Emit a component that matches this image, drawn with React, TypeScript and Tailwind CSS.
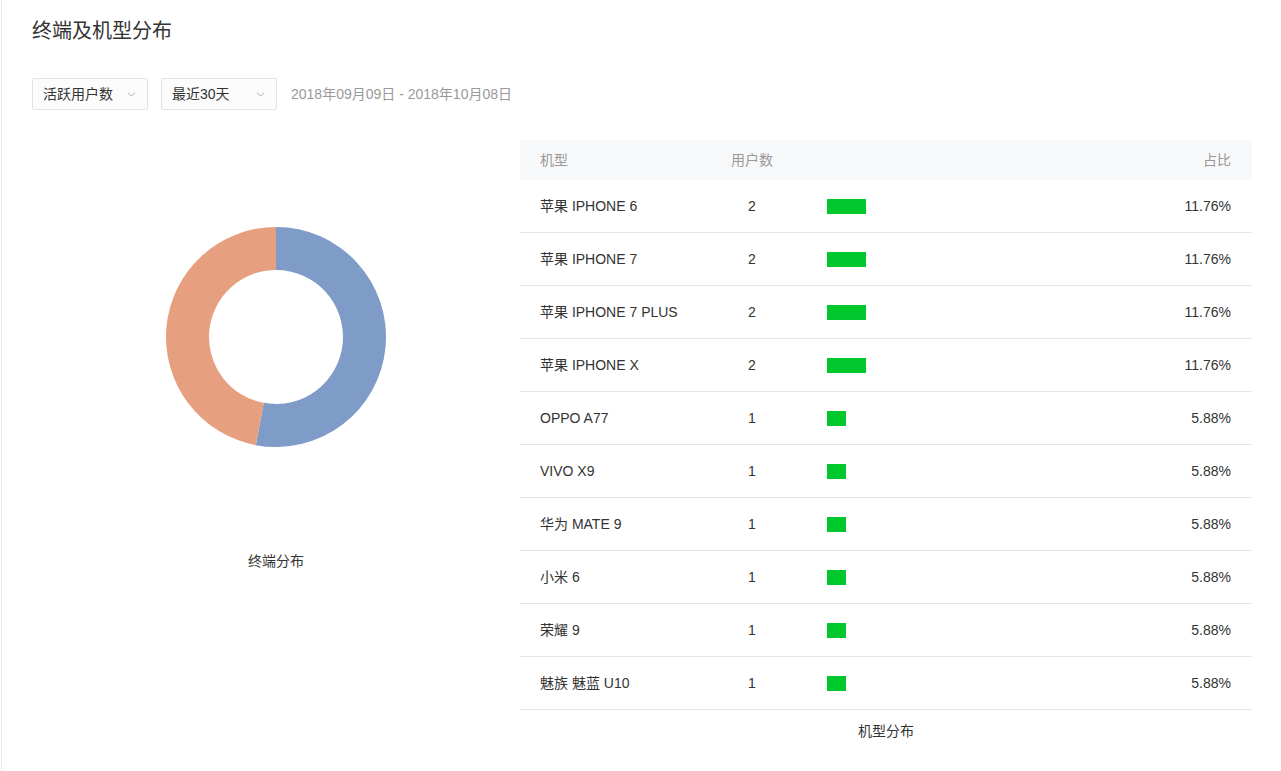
import React from "react";
import { ChevronDown } from "lucide-react";

const rows = [
  { name: "苹果 IPHONE 6", n: 2, w: 39, p: "11.76%" },
  { name: "苹果 IPHONE 7", n: 2, w: 39, p: "11.76%" },
  { name: "苹果 IPHONE 7 PLUS", n: 2, w: 39, p: "11.76%" },
  { name: "苹果 IPHONE X", n: 2, w: 39, p: "11.76%" },
  { name: "OPPO A77", n: 1, w: 19, p: "5.88%" },
  { name: "VIVO X9", n: 1, w: 19, p: "5.88%" },
  { name: "华为 MATE 9", n: 1, w: 19, p: "5.88%" },
  { name: "小米 6", n: 1, w: 19, p: "5.88%" },
  { name: "荣耀 9", n: 1, w: 19, p: "5.88%" },
  { name: "魅族 魅蓝 U10", n: 1, w: 19, p: "5.88%" },
];

function arcPath(cx: number, cy: number, R: number, r: number, a0: number, a1: number) {
  const pt = (rad: number, a: number) => [cx + rad * Math.sin(a), cy - rad * Math.cos(a)];
  const large = a1 - a0 > Math.PI ? 1 : 0;
  const [x0, y0] = pt(R, a0);
  const [x1, y1] = pt(R, a1);
  const [x2, y2] = pt(r, a1);
  const [x3, y3] = pt(r, a0);
  return `M${x0} ${y0} A${R} ${R} 0 ${large} 1 ${x1} ${y1} L${x2} ${y2} A${r} ${r} 0 ${large} 0 ${x3} ${y3} Z`;
}

function Donut() {
  const split = (9 / 17) * Math.PI * 2;
  return (
    <svg width="222" height="222" viewBox="0 0 222 222">
      <path d={arcPath(111, 111, 110, 67, 0, split)} fill="#7f9cc8" />
      <path d={arcPath(111, 111, 110, 67, split, Math.PI * 2 - 0.0001)} fill="#e6a07f" />
    </svg>
  );
}

function Select({ label }: { label: string }) {
  return (
    <div className="flex h-[32px] w-[116px] items-center justify-between rounded-[2px] border border-[#e3e3e3] bg-[#fcfcfc] pl-[10px] pr-[9px] text-[14px] text-[#333]">
      <span>{label}</span>
      <ChevronDown size={13} strokeWidth={1.5} color="#999" />
    </div>
  );
}

export default function App() {
  return (
    <div
      className="h-[771px] w-[1281px] overflow-hidden bg-white"
      style={{ fontFamily: '"Liberation Sans", "Noto Sans CJK SC", sans-serif' }}
    >
      <div className="ml-[1px] h-[771px] border-l border-[#ebebeb] pl-[30px] pt-[17px]">
        <h1 className="text-[20px] leading-[28px] text-[#333]">终端及机型分布</h1>
        <div className="mt-[33px] flex items-center">
          <Select label="活跃用户数" />
          <div className="ml-[13px]">
            <Select label="最近30天" />
          </div>
          <span className="ml-[14px] text-[14px] text-[#999]">2018年09月09日 - 2018年10月08日</span>
        </div>
        <div className="mt-[30px] flex">
          <div className="flex w-[488px] flex-col items-center">
            <div className="mt-[86px]">
              <Donut />
            </div>
            <div className="mt-[103px] text-[14px] leading-[20px] text-[#333]">终端分布</div>
          </div>
          <div className="w-[732px]">
            <div className="flex h-[40px] items-center bg-[#f7f8fa] text-[14px] text-[#999]">
              <div className="w-[192px] pl-[20px]">机型</div>
              <div className="w-[80px] text-center">用户数</div>
              <div className="flex-1 pr-[21px] text-right">占比</div>
            </div>
            {rows.map((r) => (
              <div
                key={r.name}
                className="flex h-[53px] items-center border-b border-[#e6e6e6] text-[14px] text-[#333]"
              >
                <div className="w-[192px] pl-[20px]">{r.name}</div>
                <div className="w-[80px] text-center">{r.n}</div>
                <div className="flex flex-1 items-center pl-[35px] pr-[21px]">
                  <div className="h-[15px] bg-[#00c72c]" style={{ width: r.w }} />
                  <div className="flex-1 text-right">{r.p}</div>
                </div>
              </div>
            ))}
            <div className="mt-[11px] text-center text-[14px] leading-[20px] text-[#333]">机型分布</div>
          </div>
        </div>
      </div>
    </div>
  );
}
